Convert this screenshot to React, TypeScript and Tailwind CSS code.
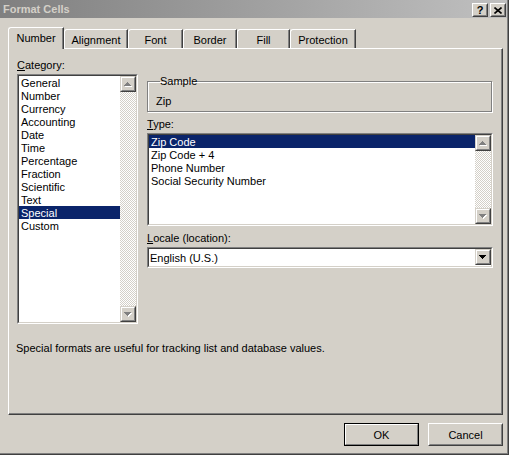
import React from "react";

const categories = [
  "General",
  "Number",
  "Currency",
  "Accounting",
  "Date",
  "Time",
  "Percentage",
  "Fraction",
  "Scientific",
  "Text",
  "Special",
  "Custom",
];

const types = ["Zip Code", "Zip Code + 4", "Phone Number", "Social Security Number"];

const tabs = [
  { label: "Number", w: "w-[56px]" },
  { label: "Alignment", w: "w-[64px]" },
  { label: "Font", w: "w-[55px]" },
  { label: "Border", w: "w-[54px]" },
  { label: "Fill", w: "w-[53px]" },
  { label: "Protection", w: "w-[66px]" },
];

const rows: [number, number][] = [
  [3, 1],
  [2, 3],
  [1, 5],
  [0, 7],
];

function Arrow({ dir, disabled }: { dir: "up" | "down"; disabled?: boolean }) {
  const rects = (dx: number, dy: number, fill: string) =>
    rows.map(([x, w], i) => (
      <rect
        key={fill + i}
        x={x + dx}
        y={(dir === "up" ? i : 3 - i) + dy}
        width={w}
        height={1}
        fill={fill}
      />
    ));
  return (
    <svg width="8" height="5" viewBox="0 0 8 5" shapeRendering="crispEdges">
      {disabled && rects(1, 1, "#ffffff")}
      {rects(0, 0, disabled ? "#808080" : "#000000")}
    </svg>
  );
}

function ScrollButton({ dir, disabled }: { dir: "up" | "down"; disabled?: boolean }) {
  return (
    <div className="w-[16px] h-[16px] shrink-0 bg-[#d4d0c8] border border-t-[#d4d0c8] border-l-[#d4d0c8] border-r-[#404040] border-b-[#404040]">
      <div className="w-full h-full flex items-center justify-center border border-t-white border-l-white border-r-[#808080] border-b-[#808080]">
        <Arrow dir={dir} disabled={disabled} />
      </div>
    </div>
  );
}

function ScrollBar() {
  return (
    <div className="w-[16px] flex flex-col bg-[repeating-conic-gradient(#ffffff_0%_25%,#d4d0c8_0%_50%)] bg-[length:2px_2px]">
      <ScrollButton dir="up" disabled />
      <div className="flex-1" />
      <ScrollButton dir="down" disabled />
    </div>
  );
}

function Sunken({ className, children }: { className?: string; children: React.ReactNode }) {
  return (
    <div
      className={
        "border border-t-[#808080] border-l-[#808080] border-r-white border-b-white " + (className ?? "")
      }
    >
      <div className="h-full flex border border-t-[#404040] border-l-[#404040] border-r-[#d4d0c8] border-b-[#d4d0c8] bg-white">
        {children}
      </div>
    </div>
  );
}

function ListRow({ text, selected }: { text: string; selected?: boolean }) {
  return (
    <div
      className={
        "h-[13px] leading-[13px] pt-[1px] pl-[2px] whitespace-nowrap " +
        (selected ? "bg-[#0a246a] text-white" : "text-black")
      }
    >
      {text}
    </div>
  );
}

function PushButton({ label, isDefault }: { label: string; isDefault?: boolean }) {
  if (isDefault) {
    return (
      <div className="w-[75px] h-[23px] border border-black">
        <div className="w-full h-full flex items-center justify-center pt-[1px] border border-t-white border-l-white border-r-[#808080] border-b-[#808080]">
          {label}
        </div>
      </div>
    );
  }
  return (
    <div className="w-[75px] h-[23px] border border-t-white border-l-white border-r-[#404040] border-b-[#404040]">
      <div className="w-full h-full flex items-center justify-center pt-[1px] border border-t-[#d4d0c8] border-l-[#d4d0c8] border-r-[#808080] border-b-[#808080]">
        {label}
      </div>
    </div>
  );
}

function TitleButton({ children }: { children: React.ReactNode }) {
  return (
    <div className="w-[16px] h-[14px] bg-[#d4d0c8] border border-t-white border-l-white border-r-[#404040] border-b-[#404040]">
      <div className="w-full h-full flex items-center justify-center border border-t-[#d4d0c8] border-l-[#d4d0c8] border-r-[#808080] border-b-[#808080] font-bold text-[11px] leading-none">
        {children}
      </div>
    </div>
  );
}

export default function App() {
  return (
    <div className="flex w-[512px] h-[457px] bg-white overflow-hidden font-['Liberation_Sans',Arial,sans-serif] text-[11px] text-black select-none">
      <div className="flex flex-col w-[509px] h-[455px] shrink-0 bg-[#d4d0c8] border-r border-b border-r-[#404040] border-b-[#404040] shadow-[inset_-1px_-1px_#808080]">
        {/* title bar */}
        <div className="h-[18px] mr-[1px] flex items-start pt-[3px] pr-[1px] bg-linear-to-r from-[#808080] to-[#c0c0c0]">
          <div className="flex-1 -mt-[2px] pl-[3px] font-bold text-[#d4d0c8] text-[11px] leading-[16px]">
            Format Cells
          </div>
          <div className="flex gap-[2px]">
            <TitleButton>?</TitleButton>
            <TitleButton>
              <svg width="8" height="7" viewBox="0 0 8 7">
                <path d="M0.5 0.5 L7.5 6.5 M7.5 0.5 L0.5 6.5" stroke="#000" strokeWidth="1.6" />
              </svg>
            </TitleButton>
          </div>
        </div>

        {/* tabs */}
        <div className="h-[30px] pt-[9px] pl-[8px] flex items-end">
          {tabs.map((t, i) =>
            i === 0 ? (
              <div
                key={t.label}
                className={
                  t.w +
                  " relative z-10 -mb-px h-[22px] pb-[1px] flex items-center justify-center bg-[#d4d0c8] border-t border-l border-white border-r border-r-[#404040] rounded-tl-[3px] shadow-[inset_-1px_0_#808080]"
                }
              >
                {t.label}
              </div>
            ) : (
              <div
                key={t.label}
                className={
                  t.w +
                  " h-[19px] pt-[2px] flex items-center justify-center border-t border-l border-white border-r border-r-[#404040] rounded-tl-[3px] shadow-[inset_-1px_0_#808080]"
                }
              >
                {t.label}
              </div>
            )
          )}
        </div>

        {/* tab panel */}
        <div className="ml-[8px] w-[495px] h-[367px] flex flex-col pl-[8px] pt-[9px] border-t border-l border-white border-r border-b border-r-[#404040] border-b-[#404040] shadow-[inset_-1px_-1px_#808080]">
          <div className="flex gap-[9px]">
            {/* category */}
            <div className="w-[121px] flex flex-col">
              <div className="h-[13px] leading-[13px] pt-[1px]">
                <span className="underline">C</span>ategory:
              </div>
              <Sunken className="mt-[3px] h-[250px]">
                <div className="flex-1 min-w-0">
                  {categories.map((c) => (
                    <ListRow key={c} text={c} selected={c === "Special"} />
                  ))}
                </div>
                <ScrollBar />
              </Sunken>
            </div>

            {/* right column */}
            <div className="w-[346px] flex flex-col">
              <fieldset className="mt-[17px] border border-[#808080] shadow-[1px_1px_0_#ffffff,inset_1px_1px_0_#ffffff] pl-[8px] pt-[6px] pb-[4px] mr-[1px]">
                <legend className="ml-[4px] px-0 leading-[13px]">Sample</legend>
                <div className="h-[13px] leading-[13px] pt-[1px]">Zip</div>
              </fieldset>

              <div className="mt-[5px] h-[13px] leading-[13px] pt-[1px]">
                <span className="underline">T</span>ype:
              </div>
              <Sunken className="mt-[3px] h-[93px]">
                <div className="flex-1 min-w-0">
                  {types.map((t) => (
                    <ListRow key={t} text={t} selected={t === "Zip Code"} />
                  ))}
                </div>
                <ScrollBar />
              </Sunken>

              <div className="mt-[5px] h-[13px] leading-[13px] pt-[1px]">
                <span className="underline">L</span>ocale (location):
              </div>
              <Sunken className="mt-[3px] h-[21px]">
                <div className="flex-1 pl-[1px] pt-[1px] leading-[17px]">English (U.S.)</div>
                <ScrollButton dir="down" />
              </Sunken>
            </div>
          </div>

          <div className="mt-[17px] -ml-px leading-[13px] pt-[1px]">
            Special formats are useful for tracking list and database values.
          </div>
        </div>

        {/* buttons */}
        <div className="ml-[8px] w-[495px] mt-[8px] flex justify-end gap-[9px]">
          <PushButton label="OK" isDefault />
          <PushButton label="Cancel" />
        </div>
      </div>
      <div className="flex-1" />
    </div>
  );
}
